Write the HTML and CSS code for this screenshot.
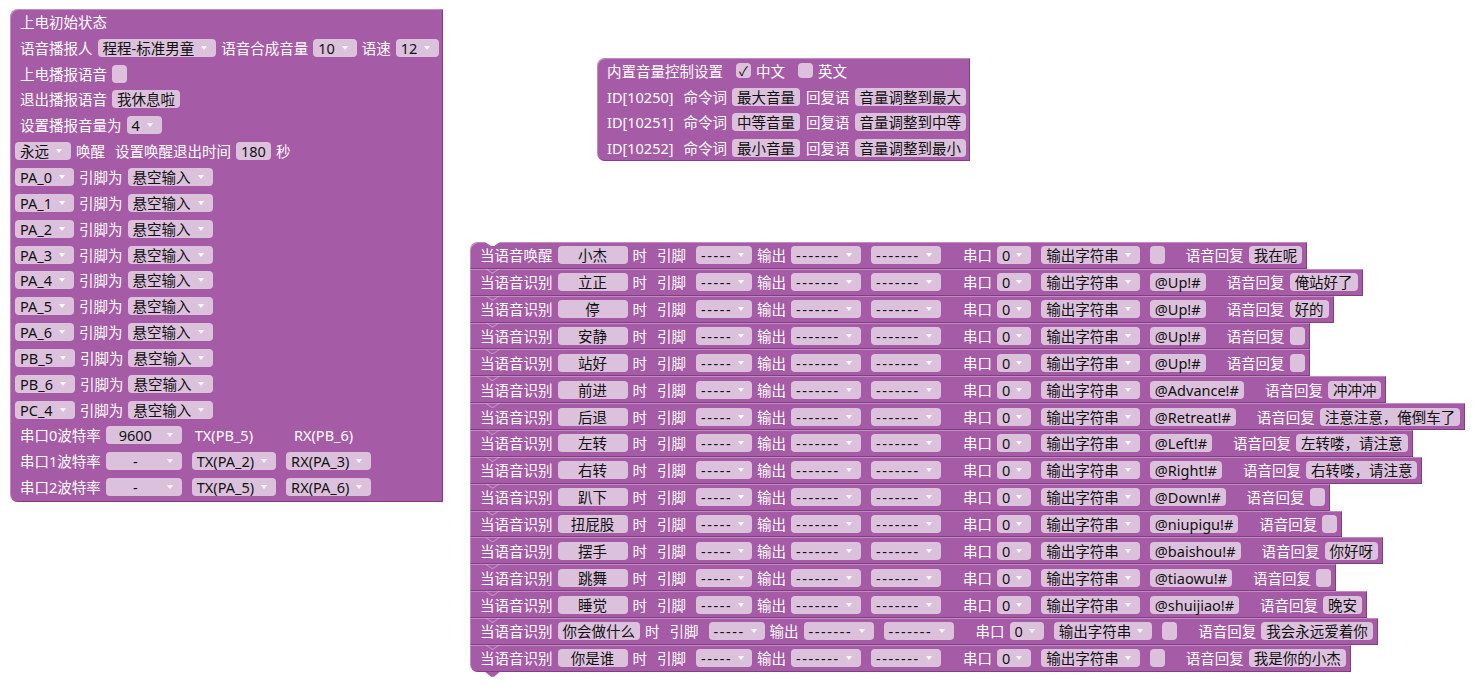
FILE: index.html
```html
<!DOCTYPE html>
<html lang="zh-CN">
  <head>
    <meta charset="UTF-8" />
    <meta name="viewport" content="width=device-width, initial-scale=1.0" />
    <title>积木编程 - 语音控制</title>
    <link rel="stylesheet" href="styles.css">
  </head>
  <body>
    <div class="workspace">
      <!-- 上电初始状态 -->
      <div class="block init">
        <div class="row"><span class="lbl">上电初始状态</span></div>
        <div class="row">
          <span class="lbl">语音播报人</span>
          <span class="fld dd">程程-标准男童<i></i></span>
          <span class="lbl">语音合成音量</span>
          <span class="fld dd">10<i></i></span>
          <span class="lbl">语速</span>
          <span class="fld dd">12<i></i></span>
        </div>
        <div class="row"><span class="lbl">上电播报语音</span><span class="fld empty"></span></div>
        <div class="row"><span class="lbl">退出播报语音</span><span class="fld">我休息啦</span></div>
        <div class="row"><span class="lbl">设置播报音量为</span><span class="fld dd">4<i></i></span></div>
        <div class="row">
          <span class="fld dd">永远<i></i></span>
          <span class="lbl">唤醒</span>
          <span class="lbl sp">设置唤醒退出时间</span>
          <span class="fld">180</span>
          <span class="lbl">秒</span>
        </div>
        <div class="row"><span class="fld dd">PA_0<i></i></span><span class="lbl">引脚为</span><span class="fld dd">悬空输入<i></i></span></div>
        <div class="row"><span class="fld dd">PA_1<i></i></span><span class="lbl">引脚为</span><span class="fld dd">悬空输入<i></i></span></div>
        <div class="row"><span class="fld dd">PA_2<i></i></span><span class="lbl">引脚为</span><span class="fld dd">悬空输入<i></i></span></div>
        <div class="row"><span class="fld dd">PA_3<i></i></span><span class="lbl">引脚为</span><span class="fld dd">悬空输入<i></i></span></div>
        <div class="row"><span class="fld dd">PA_4<i></i></span><span class="lbl">引脚为</span><span class="fld dd">悬空输入<i></i></span></div>
        <div class="row"><span class="fld dd">PA_5<i></i></span><span class="lbl">引脚为</span><span class="fld dd">悬空输入<i></i></span></div>
        <div class="row"><span class="fld dd">PA_6<i></i></span><span class="lbl">引脚为</span><span class="fld dd">悬空输入<i></i></span></div>
        <div class="row"><span class="fld dd">PB_5<i></i></span><span class="lbl">引脚为</span><span class="fld dd">悬空输入<i></i></span></div>
        <div class="row"><span class="fld dd">PB_6<i></i></span><span class="lbl">引脚为</span><span class="fld dd">悬空输入<i></i></span></div>
        <div class="row"><span class="fld dd">PC_4<i></i></span><span class="lbl">引脚为</span><span class="fld dd">悬空输入<i></i></span></div>
        <div class="row">
          <span class="lbl">串口0波特率</span>
          <span class="fld dd baud"><span class="t">9600</span><i></i></span>
          <span class="lbl tx">TX(PB_5)</span>
          <span class="lbl rx">RX(PB_6)</span>
        </div>
        <div class="row">
          <span class="lbl">串口1波特率</span>
          <span class="fld dd baud"><span class="t">-</span><i></i></span>
          <span class="fld dd sp">TX(PA_2)<i></i></span>
          <span class="fld dd sp">RX(PA_3)<i></i></span>
        </div>
        <div class="row">
          <span class="lbl">串口2波特率</span>
          <span class="fld dd baud"><span class="t">-</span><i></i></span>
          <span class="fld dd sp">TX(PA_5)<i></i></span>
          <span class="fld dd sp">RX(PA_6)<i></i></span>
        </div>
      </div>

      <!-- 内置音量控制 -->
      <div class="block volume">
        <div class="row">
          <span class="lbl">内置音量控制设置</span>
          <span class="fld chk on">✓</span>
          <span class="lbl">中文</span>
          <span class="fld chk"></span>
          <span class="lbl">英文</span>
        </div>
        <div class="row">
          <span class="lbl">ID[10250]</span>
          <span class="lbl sp">命令词</span>
          <span class="fld">最大音量</span>
          <span class="lbl near">回复语</span>
          <span class="fld">音量调整到最大</span>
        </div>
        <div class="row">
          <span class="lbl">ID[10251]</span>
          <span class="lbl sp">命令词</span>
          <span class="fld">中等音量</span>
          <span class="lbl near">回复语</span>
          <span class="fld">音量调整到中等</span>
        </div>
        <div class="row">
          <span class="lbl">ID[10252]</span>
          <span class="lbl sp">命令词</span>
          <span class="fld">最小音量</span>
          <span class="lbl near">回复语</span>
          <span class="fld">音量调整到最小</span>
        </div>
      </div>

      <!-- 语音指令 -->
      <div class="stack">
        <div class="stmt">
          <span class="lbl">当语音唤醒</span><span class="fld key">小杰</span><span class="lbl">时</span><span class="lbl sp">引脚</span>
          <span class="fld dd pin sp">-----<i></i></span><span class="lbl">输出</span><span class="fld dd out">-------<i></i></span><span class="fld dd out sp">-------<i></i></span>
          <span class="lbl far">串口</span><span class="fld dd">0<i></i></span><span class="fld dd sp">输出字符串<i></i></span><span class="fld empty sp"></span>
          <span class="lbl reply">语音回复</span><span class="fld">我在呢</span>
        </div>
        <div class="stmt">
          <span class="lbl">当语音识别</span><span class="fld key">立正</span><span class="lbl">时</span><span class="lbl sp">引脚</span>
          <span class="fld dd pin sp">-----<i></i></span><span class="lbl">输出</span><span class="fld dd out">-------<i></i></span><span class="fld dd out sp">-------<i></i></span>
          <span class="lbl far">串口</span><span class="fld dd">0<i></i></span><span class="fld dd sp">输出字符串<i></i></span><span class="fld sp">@Up!#</span>
          <span class="lbl reply">语音回复</span><span class="fld">俺站好了</span>
        </div>
        <div class="stmt">
          <span class="lbl">当语音识别</span><span class="fld key">停</span><span class="lbl">时</span><span class="lbl sp">引脚</span>
          <span class="fld dd pin sp">-----<i></i></span><span class="lbl">输出</span><span class="fld dd out">-------<i></i></span><span class="fld dd out sp">-------<i></i></span>
          <span class="lbl far">串口</span><span class="fld dd">0<i></i></span><span class="fld dd sp">输出字符串<i></i></span><span class="fld sp">@Up!#</span>
          <span class="lbl reply">语音回复</span><span class="fld">好的</span>
        </div>
        <div class="stmt">
          <span class="lbl">当语音识别</span><span class="fld key">安静</span><span class="lbl">时</span><span class="lbl sp">引脚</span>
          <span class="fld dd pin sp">-----<i></i></span><span class="lbl">输出</span><span class="fld dd out">-------<i></i></span><span class="fld dd out sp">-------<i></i></span>
          <span class="lbl far">串口</span><span class="fld dd">0<i></i></span><span class="fld dd sp">输出字符串<i></i></span><span class="fld sp">@Up!#</span>
          <span class="lbl reply">语音回复</span><span class="fld empty"></span>
        </div>
        <div class="stmt">
          <span class="lbl">当语音识别</span><span class="fld key">站好</span><span class="lbl">时</span><span class="lbl sp">引脚</span>
          <span class="fld dd pin sp">-----<i></i></span><span class="lbl">输出</span><span class="fld dd out">-------<i></i></span><span class="fld dd out sp">-------<i></i></span>
          <span class="lbl far">串口</span><span class="fld dd">0<i></i></span><span class="fld dd sp">输出字符串<i></i></span><span class="fld sp">@Up!#</span>
          <span class="lbl reply">语音回复</span><span class="fld empty"></span>
        </div>
        <div class="stmt">
          <span class="lbl">当语音识别</span><span class="fld key">前进</span><span class="lbl">时</span><span class="lbl sp">引脚</span>
          <span class="fld dd pin sp">-----<i></i></span><span class="lbl">输出</span><span class="fld dd out">-------<i></i></span><span class="fld dd out sp">-------<i></i></span>
          <span class="lbl far">串口</span><span class="fld dd">0<i></i></span><span class="fld dd sp">输出字符串<i></i></span><span class="fld sp">@Advance!#</span>
          <span class="lbl reply">语音回复</span><span class="fld">冲冲冲</span>
        </div>
        <div class="stmt">
          <span class="lbl">当语音识别</span><span class="fld key">后退</span><span class="lbl">时</span><span class="lbl sp">引脚</span>
          <span class="fld dd pin sp">-----<i></i></span><span class="lbl">输出</span><span class="fld dd out">-------<i></i></span><span class="fld dd out sp">-------<i></i></span>
          <span class="lbl far">串口</span><span class="fld dd">0<i></i></span><span class="fld dd sp">输出字符串<i></i></span><span class="fld sp">@Retreat!#</span>
          <span class="lbl reply">语音回复</span><span class="fld">注意注意，俺倒车了</span>
        </div>
        <div class="stmt">
          <span class="lbl">当语音识别</span><span class="fld key">左转</span><span class="lbl">时</span><span class="lbl sp">引脚</span>
          <span class="fld dd pin sp">-----<i></i></span><span class="lbl">输出</span><span class="fld dd out">-------<i></i></span><span class="fld dd out sp">-------<i></i></span>
          <span class="lbl far">串口</span><span class="fld dd">0<i></i></span><span class="fld dd sp">输出字符串<i></i></span><span class="fld sp">@Left!#</span>
          <span class="lbl reply">语音回复</span><span class="fld">左转喽，请注意</span>
        </div>
        <div class="stmt">
          <span class="lbl">当语音识别</span><span class="fld key">右转</span><span class="lbl">时</span><span class="lbl sp">引脚</span>
          <span class="fld dd pin sp">-----<i></i></span><span class="lbl">输出</span><span class="fld dd out">-------<i></i></span><span class="fld dd out sp">-------<i></i></span>
          <span class="lbl far">串口</span><span class="fld dd">0<i></i></span><span class="fld dd sp">输出字符串<i></i></span><span class="fld sp">@Right!#</span>
          <span class="lbl reply">语音回复</span><span class="fld">右转喽，请注意</span>
        </div>
        <div class="stmt">
          <span class="lbl">当语音识别</span><span class="fld key">趴下</span><span class="lbl">时</span><span class="lbl sp">引脚</span>
          <span class="fld dd pin sp">-----<i></i></span><span class="lbl">输出</span><span class="fld dd out">-------<i></i></span><span class="fld dd out sp">-------<i></i></span>
          <span class="lbl far">串口</span><span class="fld dd">0<i></i></span><span class="fld dd sp">输出字符串<i></i></span><span class="fld sp">@Down!#</span>
          <span class="lbl reply">语音回复</span><span class="fld empty"></span>
        </div>
        <div class="stmt">
          <span class="lbl">当语音识别</span><span class="fld key">扭屁股</span><span class="lbl">时</span><span class="lbl sp">引脚</span>
          <span class="fld dd pin sp">-----<i></i></span><span class="lbl">输出</span><span class="fld dd out">-------<i></i></span><span class="fld dd out sp">-------<i></i></span>
          <span class="lbl far">串口</span><span class="fld dd">0<i></i></span><span class="fld dd sp">输出字符串<i></i></span><span class="fld sp">@niupigu!#</span>
          <span class="lbl reply">语音回复</span><span class="fld empty"></span>
        </div>
        <div class="stmt">
          <span class="lbl">当语音识别</span><span class="fld key">摆手</span><span class="lbl">时</span><span class="lbl sp">引脚</span>
          <span class="fld dd pin sp">-----<i></i></span><span class="lbl">输出</span><span class="fld dd out">-------<i></i></span><span class="fld dd out sp">-------<i></i></span>
          <span class="lbl far">串口</span><span class="fld dd">0<i></i></span><span class="fld dd sp">输出字符串<i></i></span><span class="fld sp">@baishou!#</span>
          <span class="lbl reply">语音回复</span><span class="fld">你好呀</span>
        </div>
        <div class="stmt">
          <span class="lbl">当语音识别</span><span class="fld key">跳舞</span><span class="lbl">时</span><span class="lbl sp">引脚</span>
          <span class="fld dd pin sp">-----<i></i></span><span class="lbl">输出</span><span class="fld dd out">-------<i></i></span><span class="fld dd out sp">-------<i></i></span>
          <span class="lbl far">串口</span><span class="fld dd">0<i></i></span><span class="fld dd sp">输出字符串<i></i></span><span class="fld sp">@tiaowu!#</span>
          <span class="lbl reply">语音回复</span><span class="fld empty"></span>
        </div>
        <div class="stmt">
          <span class="lbl">当语音识别</span><span class="fld key">睡觉</span><span class="lbl">时</span><span class="lbl sp">引脚</span>
          <span class="fld dd pin sp">-----<i></i></span><span class="lbl">输出</span><span class="fld dd out">-------<i></i></span><span class="fld dd out sp">-------<i></i></span>
          <span class="lbl far">串口</span><span class="fld dd">0<i></i></span><span class="fld dd sp">输出字符串<i></i></span><span class="fld sp">@shuijiao!#</span>
          <span class="lbl reply">语音回复</span><span class="fld">晚安</span>
        </div>
        <div class="stmt">
          <span class="lbl">当语音识别</span><span class="fld key">你会做什么</span><span class="lbl">时</span><span class="lbl sp">引脚</span>
          <span class="fld dd pin sp">-----<i></i></span><span class="lbl">输出</span><span class="fld dd out">-------<i></i></span><span class="fld dd out sp">-------<i></i></span>
          <span class="lbl far">串口</span><span class="fld dd">0<i></i></span><span class="fld dd sp">输出字符串<i></i></span><span class="fld empty sp"></span>
          <span class="lbl reply">语音回复</span><span class="fld">我会永远爱着你</span>
        </div>
        <div class="stmt">
          <span class="lbl">当语音识别</span><span class="fld key">你是谁</span><span class="lbl">时</span><span class="lbl sp">引脚</span>
          <span class="fld dd pin sp">-----<i></i></span><span class="lbl">输出</span><span class="fld dd out">-------<i></i></span><span class="fld dd out sp">-------<i></i></span>
          <span class="lbl far">串口</span><span class="fld dd">0<i></i></span><span class="fld dd sp">输出字符串<i></i></span><span class="fld empty sp"></span>
          <span class="lbl reply">语音回复</span><span class="fld">我是你的小杰</span>
        </div>
      </div>
    </div>
  </body>
</html>
```

FILE: styles.css
```css
:root {
  --block: #a65ba6;
  --block-light: rgba(255, 255, 255, 0.3);
  --block-dark: rgba(60, 10, 60, 0.35);
  --field: #dcc1dd;
  --field-text: #111;
}

* {
  box-sizing: border-box;
}

body {
  margin: 0;
  background: #fff;
  font-family: "Noto Sans", "Noto Sans CJK SC", sans-serif;
  font-size: 14.5px;
  color: #fff;
}

.workspace {
  position: relative;
  width: 1475px;
  height: 687px;
  overflow: hidden;
}

/* blocks sit freely on the workspace */
.block {
  position: absolute;
  background: var(--block);
  border-radius: 8px 0 0 8px;
  box-shadow: inset 1px 1px 0 var(--block-light), inset -1px -1px 0 var(--block-dark);
}

.init {
  left: 10px;
  top: 9px;
  width: 433px;
  padding-bottom: 2px;
}

.volume {
  left: 597px;
  top: 58px;
  width: 373px;
}

.row,
.stmt {
  display: flex;
  align-items: center;
  gap: 5px;
  height: 25.85px;
  padding-left: 5px;
  white-space: nowrap;
}

.volume .row {
  height: 25.7px;
}

.lbl {
  line-height: 18px;
}

.row > .lbl:first-child,
.stmt > .lbl:first-child {
  margin-left: 5px;
}

/* editable fields */
.fld {
  display: inline-flex;
  align-items: center;
  height: 18px;
  line-height: 18px;
  padding: 0 5px;
  border-radius: 4px;
  background: var(--field);
  color: var(--field-text);
}

.fld.empty {
  width: 15px;
  padding: 0;
}

.fld.dd {
  gap: 7px;
}

/* dropdown arrow */
.fld.dd i {
  margin-left: auto;
  margin-right: 4px;
  width: 0;
  height: 0;
  border-left: 3px solid transparent;
  border-right: 3px solid transparent;
  border-top: 4px solid #fff;
}

.stmt .fld.dd {
  gap: 6px;
}

.fld.baud {
  width: 76px;
}

.fld.baud .t {
  flex: 1;
  text-align: center;
}

.fld.key {
  min-width: 70px;
  justify-content: center;
}

.fld.pin,
.fld.out {
  overflow: hidden;
  letter-spacing: 1.6px;
}

.fld.pin {
  width: 56px;
}

.fld.out {
  width: 70px;
}

.fld.chk {
  width: 15px;
  height: 15px;
  padding: 0;
  justify-content: center;
  font-size: 13px;
  margin-left: 8px;
}

.sp {
  margin-left: 5px;
}

.near {
  margin-left: 1px;
}

.far {
  margin-left: 17px;
}

.reply {
  margin-left: 16px;
}

.tx {
  margin-left: 8px;
}

.rx {
  margin-left: 36px;
}

/* stacked statement blocks */
.stack {
  position: absolute;
  left: 470px;
  top: 242px;
  display: flex;
  flex-direction: column;
  align-items: flex-start;
}

.stmt {
  position: relative;
  height: 26.87px;
  padding-right: 5px;
  background: var(--block);
  box-shadow: inset 1px 1px 0 var(--block-light), inset -1px -1px 0 var(--block-dark);
}

/* faint trace of the connection notch */
.stmt::before {
  content: "";
  position: absolute;
  top: 0;
  left: 15px;
  width: 15px;
  height: 5px;
  background: var(--block-light);
  clip-path: polygon(0 0, 1.5px 0, 7px 3.5px, 8px 3.5px, 13.5px 0, 15px 0, 8px 5px, 7px 5px);
}

.stmt:first-child {
  border-top-left-radius: 8px;
}

.stmt:first-child::before {
  height: 4px;
  background: #fff;
  clip-path: polygon(0 0, 15px 0, 9px 4px, 6px 4px);
}

.stmt:last-child {
  border-bottom-left-radius: 8px;
}

/* tab for the next block */
.stmt:last-child::after {
  content: "";
  position: absolute;
  bottom: -5px;
  left: 15px;
  width: 15px;
  height: 5px;
  background: var(--block);
  clip-path: polygon(0 0, 15px 0, 9px 5px, 6px 5px);
}
```
